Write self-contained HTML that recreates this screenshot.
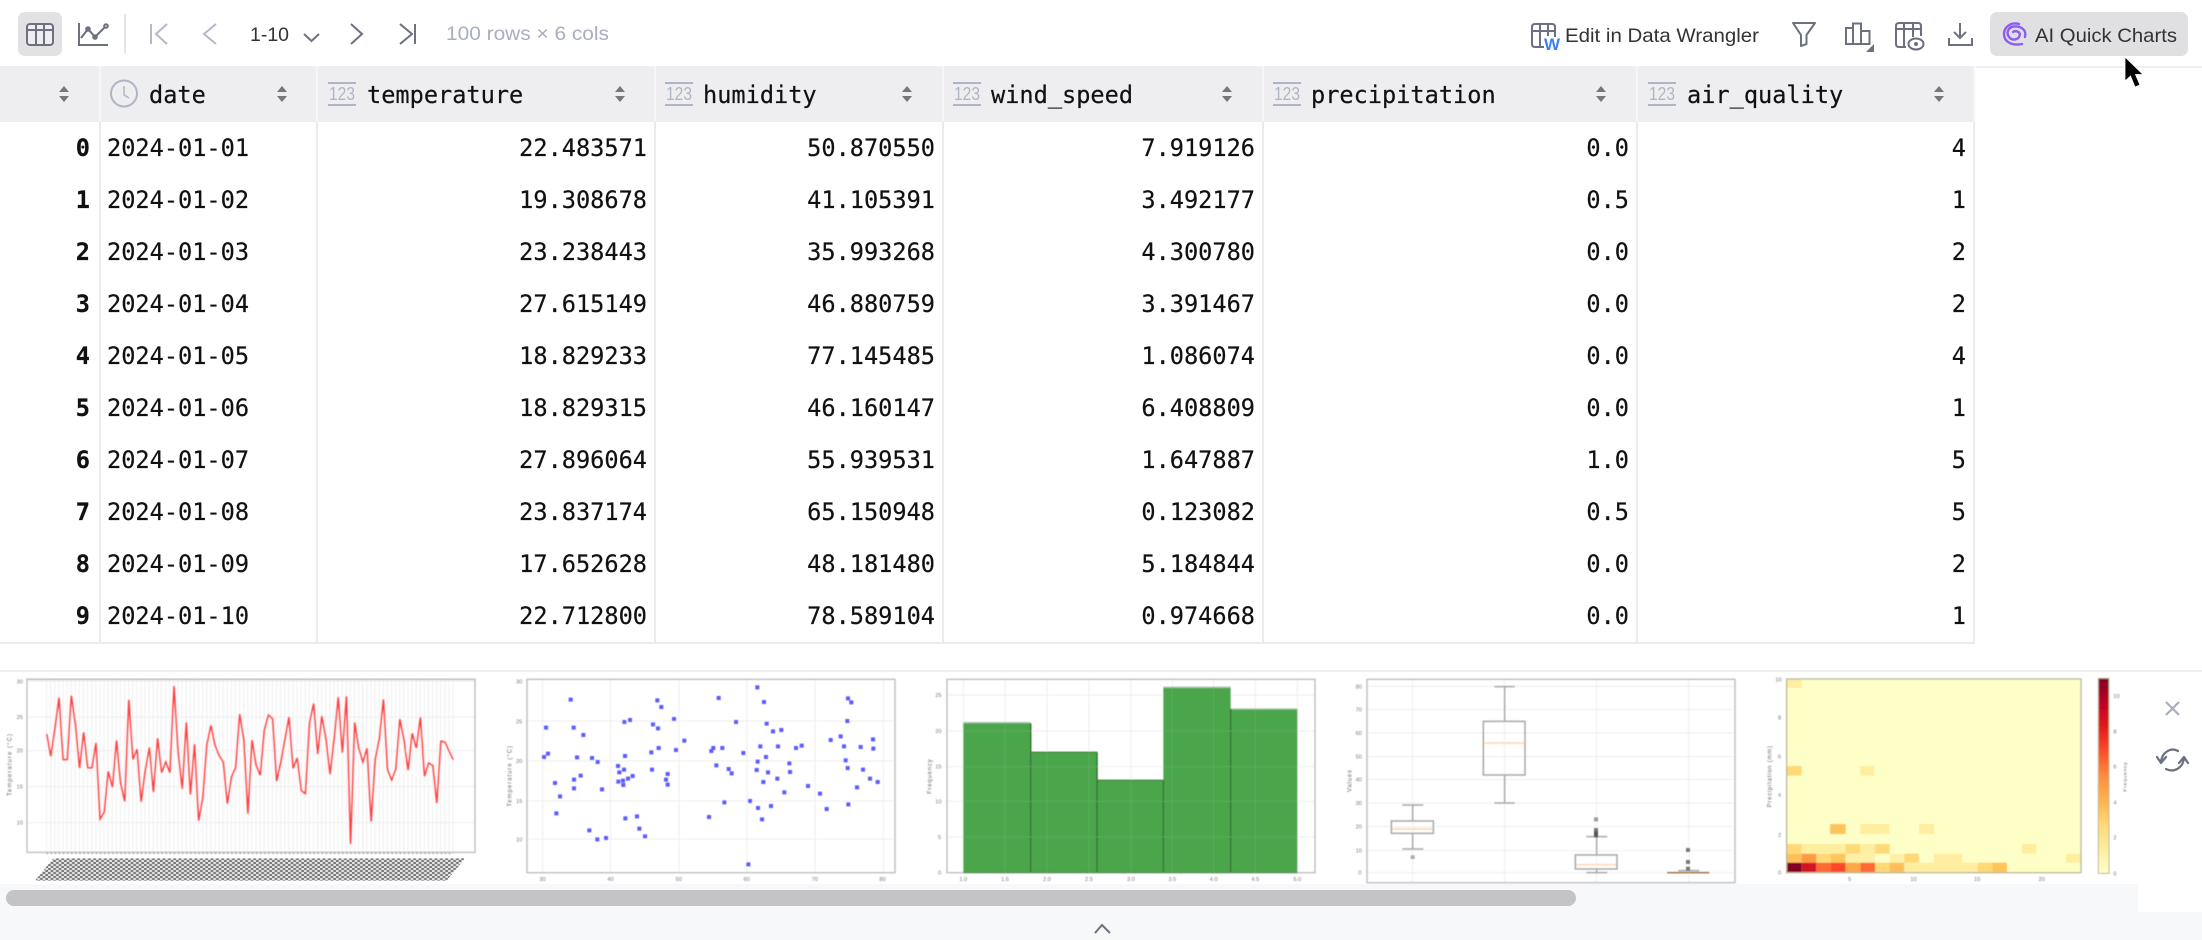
<!DOCTYPE html>
<html><head><meta charset="utf-8"><title>Table</title>
<style>
html,body{margin:0;padding:0;background:#fff;width:2202px;height:940px;overflow:hidden}
body{position:relative;font-family:"DejaVu Sans Mono","Liberation Mono",monospace}
table{position:absolute;left:0;top:66px;width:1975px;border-collapse:separate;border-spacing:0;table-layout:fixed;font-size:23.6px;color:#111;-webkit-text-stroke:.2px #111}
th{height:56px;background:#eeeef0;font-weight:400;text-align:left;padding:2px 0 0;border-right:2px solid #f5f5f7;box-sizing:border-box}
td{height:52px;padding:0 7px 0 0;text-align:right;border-right:2px solid #ebebef;box-sizing:border-box;white-space:nowrap}
td.i{font-weight:700;padding-right:9px}
td.d{text-align:left;padding-left:6px}
svg{position:absolute;left:0;top:0}
</style></head><body>
<table><colgroup><col style="width:101px"><col style="width:217px"><col style="width:338px"><col style="width:288px"><col style="width:320px"><col style="width:374px"><col style="width:337px"></colgroup>
<tr><th></th><th style="padding-left:48px">date</th><th style="padding-left:49px">temperature</th><th style="padding-left:47px">humidity</th><th style="padding-left:47px">wind_speed</th><th style="padding-left:47px">precipitation</th><th style="padding-left:49px">air_quality</th></tr>
<tr><td class="i">0</td><td class="d">2024-01-01</td><td>22.483571</td><td>50.870550</td><td>7.919126</td><td>0.0</td><td>4</td></tr>
<tr><td class="i">1</td><td class="d">2024-01-02</td><td>19.308678</td><td>41.105391</td><td>3.492177</td><td>0.5</td><td>1</td></tr>
<tr><td class="i">2</td><td class="d">2024-01-03</td><td>23.238443</td><td>35.993268</td><td>4.300780</td><td>0.0</td><td>2</td></tr>
<tr><td class="i">3</td><td class="d">2024-01-04</td><td>27.615149</td><td>46.880759</td><td>3.391467</td><td>0.0</td><td>2</td></tr>
<tr><td class="i">4</td><td class="d">2024-01-05</td><td>18.829233</td><td>77.145485</td><td>1.086074</td><td>0.0</td><td>4</td></tr>
<tr><td class="i">5</td><td class="d">2024-01-06</td><td>18.829315</td><td>46.160147</td><td>6.408809</td><td>0.0</td><td>1</td></tr>
<tr><td class="i">6</td><td class="d">2024-01-07</td><td>27.896064</td><td>55.939531</td><td>1.647887</td><td>1.0</td><td>5</td></tr>
<tr><td class="i">7</td><td class="d">2024-01-08</td><td>23.837174</td><td>65.150948</td><td>0.123082</td><td>0.5</td><td>5</td></tr>
<tr><td class="i">8</td><td class="d">2024-01-09</td><td>17.652628</td><td>48.181480</td><td>5.184844</td><td>0.0</td><td>2</td></tr>
<tr><td class="i">9</td><td class="d">2024-01-10</td><td>22.712800</td><td>78.589104</td><td>0.974668</td><td>0.0</td><td>1</td></tr>
</table>

<svg width="2202" height="940" viewBox="0 0 2202 940" font-family="'Liberation Sans',sans-serif">
<defs>
<filter id="b" x="-5%" y="-5%" width="110%" height="110%"><feGaussianBlur stdDeviation="1.3"/></filter>
<g id="s"><path d="M0-8L5-2H-5ZM0 8L5 2H-5Z" fill="#777"/></g>
<pattern id="vg" width="12.32" height="10" patternUnits="userSpaceOnUse" x="134"><rect x="4" width="3" height="10" fill="#eee"/></pattern>
<pattern id="chk" width="16" height="12" patternUnits="userSpaceOnUse"><rect width="16" height="12" fill="#e2e2e2"/><rect width="8" height="6" fill="#7c7c7c"/><rect x="8" y="6" width="8" height="6" fill="#7c7c7c"/></pattern>
<linearGradient id="cb" x1="0" y1="0" x2="0" y2="1"><stop offset="0" stop-color="#800026"/><stop offset=".125" stop-color="#bd0026"/><stop offset=".25" stop-color="#e31a1c"/><stop offset=".375" stop-color="#fc4e2a"/><stop offset=".5" stop-color="#fd8d3c"/><stop offset=".625" stop-color="#feb24c"/><stop offset=".75" stop-color="#fed976"/><stop offset=".875" stop-color="#ffeda0"/><stop offset="1" stop-color="#ffffcc"/></linearGradient>
</defs>

<!-- top/right header line -->
<rect x="1976" y="66" width="226" height="2" fill="#eeeef4"/>
<rect x="0" y="642" width="1975" height="2" fill="#ebebef"/>
<!-- toolbar -->
<rect x="18" y="12" width="44" height="44" rx="7" fill="#e2e2e4"/>
<g fill="none" stroke="#6c7080" stroke-width="2">
<rect x="27" y="24" width="26" height="21" rx="3" fill="#eeeef0"/><path d="M27 30H53M36 24V45M44 24V45"/>
<path d="M79 23V45H108"/><path d="M81 38L88 29L95 37L105 27"/><circle cx="88" cy="29" r="1.8"/><circle cx="95" cy="37" r="1.8"/><circle cx="106" cy="26" r="1.8"/>
</g>
<rect x="124" y="14" width="2" height="40" fill="#e5e5e9"/>
<g fill="none" stroke-width="2">
<path d="M151 24V44M167 24L156 34L167 44" stroke="#b4b8c8"/>
<path d="M216 24L204 34L216 44" stroke="#b4b8c8"/>
<path d="M304 34L311.5 41L319 34" stroke="#6c7080"/>
<path d="M351 24L362 34L351 44" stroke="#6c7080"/>
<path d="M400 24L412 34L400 44M415 24V44" stroke="#6c7080"/>
</g>
<text x="250" y="41" font-size="19" fill="#333" textLength="39" lengthAdjust="spacingAndGlyphs">1-10</text>
<text x="446" y="40" font-size="19.5" fill="#a8aec0" textLength="163" lengthAdjust="spacingAndGlyphs">100 rows × 6 cols</text>

<g fill="none" stroke="#6c7080" stroke-width="2">
<path d="M1544 47H1535Q1532 47 1532 44V27Q1532 24 1535 24H1552Q1555 24 1555 27V37M1532 31H1555M1540 24V47M1548 24V36"/>
</g>
<text x="1544" y="50" font-size="17" font-weight="700" fill="#3b82f6" textLength="16" lengthAdjust="spacingAndGlyphs">W</text>
<text x="1565" y="42" font-size="19.5" fill="#333" textLength="194" lengthAdjust="spacingAndGlyphs">Edit in Data Wrangler</text>
<g fill="none" stroke="#6c7080" stroke-width="2">
<path d="M1793 23H1815L1806.5 35V44L1801 46V35Z" stroke-linejoin="round"/>
<path d="M1846 44V28H1853V44ZM1853 44V23.5H1861V44ZM1861 44V31H1869.5V44ZM1846 44H1869.5"/>
<path d="M1906 47H1899Q1896 47 1896 44V26Q1896 23 1899 23H1918Q1921 23 1921 26V36M1896 29H1921M1904 23V47M1913 23V37"/>
<ellipse cx="1916" cy="44" rx="7.5" ry="5.5"/>
<path d="M1960 23V38M1954 32L1960 38L1966 32M1949 38V45H1972V38"/>
</g>
<circle cx="1916" cy="44" r="2" fill="#6c7080"/>
<path d="M1866 52L1874 44V52Z" fill="#6c7080"/>

<rect x="1990" y="12" width="198" height="44" rx="7" fill="#e0e0e2"/>
<g fill="none" stroke="#8b5cf6" stroke-width="2.4" stroke-linecap="round">
<path d="M2019 24C2010 21.500 2004 28 2004 34C2004 42 2012 46 2022 44"/>
<path d="M2025 37C2027 29 2020 26 2014 26.500C2008 27 2006 33 2009 37C2012 41 2018 40 2019.500 36C2021 32 2016 30 2013 32"/>
</g>
<text x="2035" y="42" font-size="19.5" fill="#333" textLength="142" lengthAdjust="spacingAndGlyphs">AI Quick Charts</text>
<path d="M2125 57V81L2130.500 76L2135 87L2140 85L2135.500 74.500L2143 74.500Z" fill="#000" stroke="#fff" stroke-width=".8"/>

<!-- header icons -->
<use href="#s" x="64" y="94"/><use href="#s" x="282" y="94"/><use href="#s" x="620" y="94"/><use href="#s" x="907" y="94"/><use href="#s" x="1227" y="94"/><use href="#s" x="1601" y="94"/><use href="#s" x="1939" y="94"/>
<g fill="none" stroke="#b0b5c6" stroke-width="2"><circle cx="124" cy="93.500" r="13"/><path d="M124 86V95L129 98" stroke-width="1.500"/></g>
<g fill="#b0b5c6" font-size="18" >
<rect x="328" y="82" width="28" height="2"/><rect x="328" y="104" width="28" height="2"/><text x="329" y="100" textLength="26" lengthAdjust="spacingAndGlyphs">123</text>
<rect x="665" y="82" width="28" height="2"/><rect x="665" y="104" width="28" height="2"/><text x="666" y="100" textLength="26" lengthAdjust="spacingAndGlyphs">123</text>
<rect x="953" y="82" width="28" height="2"/><rect x="953" y="104" width="28" height="2"/><text x="954" y="100" textLength="26" lengthAdjust="spacingAndGlyphs">123</text>
<rect x="1273" y="82" width="28" height="2"/><rect x="1273" y="104" width="28" height="2"/><text x="1274" y="100" textLength="26" lengthAdjust="spacingAndGlyphs">123</text>
<rect x="1648" y="82" width="28" height="2"/><rect x="1648" y="104" width="28" height="2"/><text x="1649" y="100" textLength="26" lengthAdjust="spacingAndGlyphs">123</text>
</g>

<!-- bottom panel -->
<rect x="0" y="670" width="2202" height="2" fill="#eeeef2"/>
<rect x="0" y="884" width="2202" height="56" fill="#f7f8fa"/>
<rect x="2138" y="884" width="64" height="28" fill="#fff"/>
<rect x="6" y="890" width="1570" height="16" rx="8" fill="#c4c4c6"/>
<path d="M1095 933L1102 925L1110 933" fill="none" stroke="#6c7080" stroke-width="2"/>
<path d="M2166 702L2179 715M2179 702L2166 715" stroke="#a8aec0" stroke-width="2.200" fill="none"/>
<g fill="none" stroke="#6c7080" stroke-width="2.200" stroke-linecap="round" stroke-linejoin="round">
<path d="M2178 751C2171 747 2162 752 2161 762M2157 757L2161 763L2166 757"/>
<path d="M2166 769C2174 773 2183 768 2184 758M2179 763L2184 757L2188 763"/>
</g>

<!-- chart 1: line -->
<g transform="translate(0,660) scale(.33333)" font-size="17" fill="#777">
<polygon points="160,595 1395,595 1340,662 105,662" fill="url(#chk)"/>
<g filter="url(#b)">
<rect x="134" y="60" width="1228" height="516" fill="url(#vg)"/>
<path d="M80 64H1425M80 171H1425M80 272H1425M80 380H1425M80 488H1425" stroke="#eee" stroke-width="3"/>
<rect x="81" y="58" width="1344" height="519" fill="none" stroke="#bbb" stroke-width="4"/>
<path d="M140 580H1360" stroke="#888" stroke-width="5" stroke-dasharray="3 9.320"/>
<polyline transform="translate(140,274.300) scale(12.320,-106)" fill="none" stroke="#ff3a3a" stroke-width="1.500" vector-effect="non-scaling-stroke" points="0,.4967 1,-.1383 2,.6477 3,1.523 4,-.2342 5,-.2341 6,1.5792 7,.7674 8,-.4695 9,.5426 10,-.4634 11,-.4657 12,.242 13,-1.9133 14,-1.7249 15,-.5623 16,-1.0128 17,.3142 18,-.908 19,-1.4123 20,1.4656 21,-.2258 22,.0675 23,-1.4247 24,-.5444 25,.1109 26,-1.151 27,.3757 28,-.6006 29,-.2917 30,-.6017 31,1.8523 32,-.0135 33,-1.0577 34,.8225 35,-1.2208 36,.2089 37,-1.9597 38,-1.3282 39,.1969 40,.7385 41,.1714 42,-.1156 43,-.3011 44,-1.4785 45,-.7198 46,-.4606 47,1.0571 48,.3436 49,-1.763 50,.3241 51,-.3851 52,-.6769 53,.6117 54,1.031 55,.9313 56,-.8392 57,-.3092 58,.3313 59,.9755 60,-.4792 61,-.1857 62,-1.1063 63,-1.1962 64,.8125 65,1.3562 66,-.072 67,1.0035 68,.3616 69,-.6451 70,.3614 71,1.538 72,-.0358 73,1.5646 74,-2.6197 75,.8219 76,.087 77,-.299 78,.0918 79,-1.9876 80,-.2197 81,.3571 82,1.4779 83,-.5183 84,-.8085 85,-.5018 86,.9154 87,.3288 88,-.5298 89,.5133 90,.0971 91,.9686 92,-.7021 93,-.3277 94,-.3921 95,-1.4635 96,.2961 97,.2611 98,.0051 99,-.2346"/>
<text x="50" y="70">30</text><text x="50" y="177">25</text><text x="50" y="278">20</text><text x="50" y="386">15</text><text x="50" y="494">10</text>
<text transform="translate(35,408) rotate(-90)" font-size="18" textLength="186" fill="#666">Temperature (°C)</text>
</g></g>

<!-- chart 2: scatter -->
<g transform="translate(500,660) scale(.33333)" font-size="17" fill="#777">
<g filter="url(#b)">
<path d="M128 58V638M332 58V638M537 58V638M741 58V638M945 58V638M1150 58V638M80 183H1185M80 303H1185M80 423H1185M80 537H1185" stroke="#eee" stroke-width="3"/>
<rect x="81" y="58" width="1104" height="580" fill="none" stroke="#bbb" stroke-width="4"/>
<text x="48" y="70">30</text><text x="48" y="190">25</text><text x="48" y="309">20</text><text x="48" y="429">15</text><text x="48" y="544">10</text>
<text x="118" y="663">30</text><text x="322" y="663">40</text><text x="527" y="663">50</text><text x="731" y="663">60</text><text x="935" y="663">70</text><text x="1138" y="663">80</text>
<text transform="translate(35,440) rotate(-90)" font-size="18" textLength="182" fill="#666">Temperature (°C)</text>
<path fill="none" stroke="#5a5aff" stroke-width="12" stroke-linecap="square" d="M212 119h.1M138 203h.1M221 203h.1M250 225h.1M132 291h.1M144 281h.1M231 292h.1M276 294h.1M293 306h.1M242 347h.1M222 359h.1M165 369h.1M222 385h.1M306 388h.1M180 409h.1M169 460h.1M268 511h.1M292 538h.1M318 534h.1M354 318h.1M358 337h.1M372 329h.1M398 348h.1M384 356h.1M369 362h.1M355 365h.1M370 375h.1M375 288h.1M373 186h.1M390 180h.1M376 475h.1M411 469h.1M418 506h.1M435 529h.1M472 121h.1M484 141h.1M459 193h.1M474 205h.1M522 177h.1M553 242h.1M528 270h.1M476 264h.1M454 277h.1M456 329h.1M503 342h.1M498 359h.1M503 374h.1M656 114h.1M708 186h.1M772 82h.1M792 126h.1M800 191h.1M819 214h.1M844 210h.1M781 259h.1M834 259h.1M888 264h.1M905 257h.1M798 291h.1M773 305h.1M770 330h.1M804 337h.1M832 356h.1M790 366h.1M868 310h.1M870 336h.1M924 378h.1M853 397h.1M960 401h.1M980 447h.1M1045 433h.1M750 423h.1M774 444h.1M813 438h.1M786 478h.1M745 613h.1M627 471h.1M673 427h.1M649 316h.1M686 327h.1M695 340h.1M730 279h.1M667 264h.1M640 264h.1M634 273h.1M992 240h.1M1022 229h.1M1032 259h.1M1082 261h.1M1119 238h.1M1120 266h.1M1037 301h.1M1043 324h.1M1089 329h.1M1110 356h.1M1133 366h.1M1071 382h.1M1044 115h.1M1054 127h.1M1042 183h.1"/>
</g></g>

<!-- chart 3: hist -->
<g transform="translate(920,660) scale(.33333)" font-size="17" fill="#777">
<g filter="url(#b)">
<path d="M80 105H1185M80 213H1185M80 320H1185M80 424H1185M80 531H1185M130 58V638M255 58V638M381 58V638M507 58V638M633 58V638M757 58V638M881 58V638M1006 58V638M1132 58V638" stroke="#eee" stroke-width="3"/>
<rect x="81" y="58" width="1104" height="580" fill="none" stroke="#bbb" stroke-width="4"/>
<path d="M130 638V188H332V277H532V361H730V82H932V147H1132V638Z" fill="#4ca64c"/>
<path d="M130 188H332M730 82H932M932 147H1132" stroke="#a9c2a9" stroke-width="4" fill="none"/>
<path d="M332 277H532M532 361H730" stroke="#3d8a3d" stroke-width="4" fill="none"/>
<path d="M332 190V638M531 277V638M730 361V638M932 147V638" stroke="#3b7a3b" stroke-width="5" fill="none"/>
<path d="M130 638H1132" stroke="#4b8a4b" stroke-width="3"/>
<path d="M255 190V638M381 277V638M507 277V638M633 361V638M757 82V638M881 82V638M1006 147V638M130 213H332M730 213H1132M130 320H532M730 320H1132M130 424H1132M130 531H1132" stroke="#5fb05f" stroke-width="2" fill="none"/>
<text x="46" y="111">25</text><text x="46" y="219">20</text><text x="46" y="326">15</text><text x="46" y="430">10</text><text x="54" y="537">5</text><text x="54" y="644">0</text>
<text x="118" y="663">1.0</text><text x="243" y="663">1.5</text><text x="369" y="663">2.0</text><text x="495" y="663">2.5</text><text x="621" y="663">3.0</text><text x="745" y="663">3.5</text><text x="869" y="663">4.0</text><text x="994" y="663">4.5</text><text x="1120" y="663">5.0</text>
<text transform="translate(35,402) rotate(-90)" font-size="18" textLength="104" fill="#666">Frequency</text>
</g></g>

<!-- chart 4: box -->
<g transform="translate(1340,660) scale(.33333)" font-size="17" fill="#777">
<g filter="url(#b)">
<path d="M80 79H1185M80 148H1185M80 219H1185M80 290H1185M80 358H1185M80 429H1185M80 500H1185M80 572H1185M80 638H1185M218 58V668M494 58V668M770 58V668M1046 58V668" stroke="#eee" stroke-width="3"/>
<rect x="81" y="58" width="1104" height="610" fill="none" stroke="#bbb" stroke-width="4"/>
<text x="47" y="85">80</text><text x="47" y="154">70</text><text x="47" y="225">60</text><text x="47" y="296">50</text><text x="47" y="364">40</text><text x="47" y="435">30</text><text x="47" y="506">20</text><text x="47" y="578">10</text><text x="55" y="644">0</text>
<text transform="translate(35,396) rotate(-90)" font-size="18" textLength="66" fill="#666">Values</text>
<g fill="none" stroke="#a8a8a8" stroke-width="4.500">
<rect x="154" y="483" width="126" height="37"/><path d="M218 435V483M218 520V567M187 435H250M187 567H250"/>
<rect x="430" y="184" width="125" height="161"/><path d="M494 80V184M494 345V429M463 80H524M463 429H524"/>
<rect x="706" y="585" width="125" height="42"/><path d="M770 530V585M770 627V638M739 530H802M739 638H802"/>
<path d="M1015 632H1078"/>
</g>
<path d="M156 507H278M432 249H553M708 614H829" stroke="#ffd9b8" stroke-width="5"/>
<path d="M981 638H1108" stroke="#a87850" stroke-width="5"/>
<g fill="#777"><rect x="212" y="586" width="12" height="11" fill="#aaa"/><rect x="762" y="472" width="12" height="12" fill="#999"/><rect x="762" y="504" width="12" height="12"/><rect x="762" y="514" width="12" height="18" fill="#555"/><rect x="1038" y="564" width="12" height="12"/><rect x="1038" y="600" width="12" height="12"/><rect x="1038" y="620" width="12" height="12"/></g>
</g></g>

<!-- chart 5: heatmap -->
<g transform="translate(1750,660) scale(.33333)" font-size="17" fill="#777">
<g filter="url(#b)">
<rect x="110" y="57" width="883" height="581" fill="#feffc6"/>
<g>
<rect x="110" y="608" width="45" height="30" fill="#800026"/><rect x="155" y="608" width="44" height="30" fill="#d01525"/><rect x="199" y="608" width="44" height="30" fill="#fd6a35"/><rect x="243" y="608" width="44" height="30" fill="#f94a2a"/><rect x="287" y="608" width="44" height="30" fill="#fea746"/><rect x="331" y="608" width="44" height="30" fill="#fd6a35"/><rect x="375" y="608" width="44" height="30" fill="#fed976"/><rect x="419" y="608" width="44" height="30" fill="#febf5a"/><rect x="463" y="608" width="220" height="30" fill="#ffeda0"/><rect x="683" y="608" width="44" height="30" fill="#fed976"/><rect x="727" y="608" width="44" height="30" fill="#fec45c"/>
<rect x="110" y="581" width="45" height="27" fill="#febf5a"/><rect x="155" y="581" width="44" height="27" fill="#fd9a40"/><rect x="199" y="581" width="44" height="27" fill="#fed976"/><rect x="243" y="581" width="44" height="27" fill="#fec45c"/><rect x="287" y="581" width="88" height="27" fill="#fff0a8"/><rect x="419" y="581" width="44" height="27" fill="#fff0a8"/><rect x="463" y="581" width="44" height="27" fill="#fed976"/><rect x="551" y="581" width="86" height="27" fill="#ffeda0"/><rect x="948" y="581" width="44" height="27" fill="#ffeda0"/>
<rect x="110" y="552" width="45" height="29" fill="#fed976"/><rect x="155" y="552" width="132" height="29" fill="#ffeda0"/><rect x="287" y="552" width="44" height="29" fill="#fed976"/><rect x="331" y="552" width="44" height="29" fill="#ffeda0"/><rect x="375" y="552" width="44" height="29" fill="#fed976"/><rect x="816" y="552" width="43" height="29" fill="#ffeda0"/>
<rect x="240" y="492" width="47" height="30" fill="#fec45c"/><rect x="331" y="492" width="87" height="30" fill="#ffeda0"/><rect x="507" y="492" width="45" height="30" fill="#ffeda0"/>
<rect x="110" y="318" width="45" height="29" fill="#fed976"/><rect x="331" y="318" width="42" height="29" fill="#ffeda0"/>
<rect x="110" y="57" width="45" height="27" fill="#ffeda0"/>
</g>
<rect x="110" y="57" width="883" height="581" fill="none" stroke="#bdb89a" stroke-width="4"/>
<rect x="1045" y="55" width="32" height="585" fill="url(#cb)"/>
<rect x="1045" y="55" width="32" height="585" fill="none" stroke="#bdb89a" stroke-width="3"/>
<text x="76" y="64">10</text><text x="84" y="178">8</text><text x="84" y="296">6</text><text x="84" y="411">4</text><text x="84" y="531">2</text><text x="84" y="644">0</text>
<text x="294" y="663">5</text><text x="481" y="663">10</text><text x="672" y="663">15</text><text x="866" y="663">20</text>
<text x="1090" y="114">10</text><text x="1090" y="221">8</text><text x="1090" y="326">6</text><text x="1090" y="433">4</text><text x="1090" y="539">2</text><text x="1090" y="646">0</text>
<text transform="translate(64,442) rotate(-90)" font-size="18" textLength="184" fill="#666">Precipitation (mm)</text>
<text transform="translate(1130,395) rotate(-90)" font-size="15" textLength="88" fill="#666">Frequency</text>
</g></g>
</svg>
</body></html>
